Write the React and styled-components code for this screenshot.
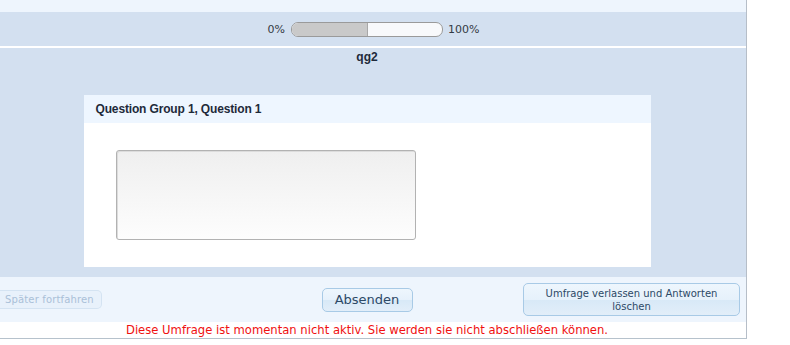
import React from "react";
import styled, { createGlobalStyle } from "styled-components";

const Global = createGlobalStyle`
  html, body { margin: 0; padding: 0; background: #ffffff; }
  body { font-family: "DejaVu Sans", Verdana, sans-serif; }
`;

const Frame = styled.div`
  width: 746px;
  border-right: 1px solid #b6bec8;
  border-bottom: 1px solid #b6c2cc;
  background: #ffffff;
`;

const TopBand = styled.div`
  height: 12px;
  background: #eef5fd;
`;

const ProgressBand = styled.div`
  height: 34px;
  background: #d3e0f0;
  border-bottom: 2px solid #ffffff;
  display: flex;
  align-items: center;
  justify-content: center;
  font-family: "DejaVu Sans", sans-serif;
  font-size: 11px;
  color: #333a44;
`;

const Percent = styled.span`
  margin: ${(p) => (p.$left ? "0 6px 0 1px" : "0 0 0 5px")};
  line-height: 14px;
  padding-top: 1px;
`;

const Track = styled.div`
  width: 150px;
  height: 13px;
  border: 1px solid #9a9a9a;
  border-radius: 7px;
  background: #f8f9fb;
  overflow: hidden;
  display: flex;
`;

const Fill = styled.div`
  height: 100%;
  background: #c9c9c9;
  border-right: 1px solid #a8a8a8;
`;

const Main = styled.div`
  background: #d3e0f0;
  padding: 1px 12px 10px 0;
`;

const GroupTitle = styled.div`
  font-family: "Liberation Sans", Arial, sans-serif;
  font-weight: bold;
  font-size: 12px;
  line-height: 16px;
  text-align: center;
  color: #1e2a3a;
`;

const Card = styled.div`
  width: 567px;
  margin: 30px auto 0;
  background: #ffffff;
`;

const CardHeader = styled.div`
  height: 28px;
  line-height: 28px;
  background: #eef6ff;
  padding-left: 12px;
  font-family: "Liberation Sans", Arial, sans-serif;
  font-weight: bold;
  font-size: 12px;
  letter-spacing: -0.15px;
  color: #1e2a3a;
`;

const CardBody = styled.div`
  padding: 27px 32px;
`;

const TextArea = styled.textarea`
  display: block;
  box-sizing: border-box;
  width: 300px;
  height: 90px;
  margin: 0;
  padding: 0;
  resize: none;
  border: 1px solid #b2b2b2;
  border-radius: 3px;
  background: linear-gradient(#efefef, #fdfdfd);
  box-shadow: inset 1px 1px 0 #dcdcdc;
  outline: none;
`;

const Footer = styled.div`
  height: 45px;
  background: #eef5fd;
  padding-right: 12px;
  display: grid;
  grid-template-columns: 1fr auto 1fr;
  align-items: center;
`;

const Button = styled.button`
  box-sizing: border-box;
  font-family: "DejaVu Sans", Verdana, sans-serif;
  border-radius: 5px;
  cursor: pointer;
  padding: 0;
  border: 1px solid ${(p) => (p.disabled ? "#d4e3f2" : "#a8cae6")};
  color: ${(p) => (p.disabled ? "#aac0d8" : "#2c4966")};
  background: ${(p) =>
    p.disabled
      ? "#e8f1fb"
      : "linear-gradient(#eef6fd 0%, #e6f1fb 50%, #d8e9f7 52%, #e2eef9 100%)"};
`;

const LaterButton = styled(Button)`
  justify-self: start;
  width: 102px;
  height: 19px;
  font-size: 10px;
  letter-spacing: 0.15px;
  border-left: none;
  border-radius: 0 5px 5px 0;
  text-align: left;
  padding-left: 5px;
`;

const SubmitButton = styled(Button)`
  width: 91px;
  height: 24px;
  font-size: 13px;
`;

const LeaveButton = styled(Button)`
  justify-self: end;
  margin-right: -6px;
  width: 217px;
  height: 33px;
  font-size: 10px;
  line-height: 13px;
  padding: 0 14px;
`;

const Message = styled.div`
  height: 16px;
  line-height: 17px;
  padding-right: 12px;
  text-align: center;
  font-family: "DejaVu Sans", Verdana, sans-serif;
  font-size: 11.6px;
  color: #f01010;
`;

export default function App() {
  const progress = 50;
  return (
    <>
      <Global />
      <Frame>
        <TopBand />
        <ProgressBand>
          <Percent $left>0%</Percent>
          <Track>
            <Fill style={{ width: `${progress}%` }} />
          </Track>
          <Percent>100%</Percent>
        </ProgressBand>
        <Main>
          <GroupTitle>qg2</GroupTitle>
          <Card>
            <CardHeader>Question Group 1, Question 1</CardHeader>
            <CardBody>
              <TextArea />
            </CardBody>
          </Card>
        </Main>
        <Footer>
          <LaterButton disabled>Später fortfahren</LaterButton>
          <SubmitButton>Absenden</SubmitButton>
          <LeaveButton>Umfrage verlassen und Antworten löschen</LeaveButton>
        </Footer>
        <Message>
          Diese Umfrage ist momentan nicht aktiv. Sie werden sie nicht abschließen können.
        </Message>
      </Frame>
    </>
  );
}
